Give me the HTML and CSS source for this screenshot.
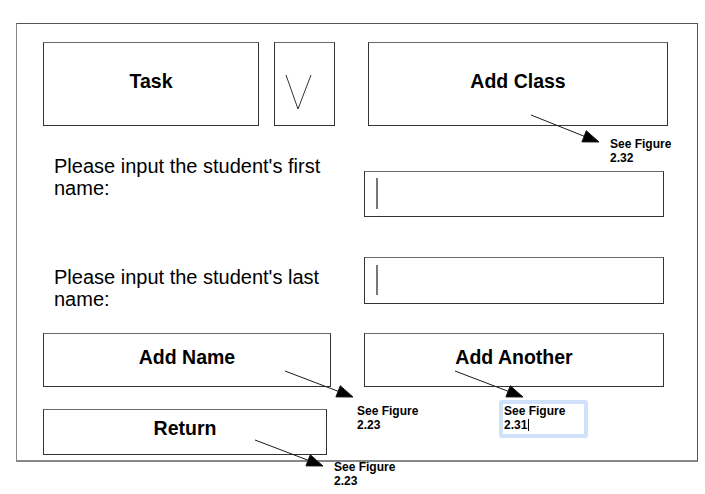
FILE: index.html
```html
<!DOCTYPE html>
<html>
<head>
<meta charset="utf-8">
<link rel="stylesheet" href="styles.css">
</head>
<body>
<div class="page">
  <div class="frame">
    <div class="row row-top">
      <div class="box btn task">Task</div>
      <div class="box vbox">
        <svg class="vglyph" width="61" height="84" viewBox="0 0 61 84"><polyline points="12,33 24,67 37,33" fill="none" stroke="#333" stroke-width="1"/></svg>
      </div>
      <div class="box btn addclass">Add Class</div>
    </div>
    <div class="row row-first">
      <div class="prompt">Please input the student's first name:</div>
      <div class="box field field-first"><span class="caret"></span></div>
    </div>
    <div class="row row-last">
      <div class="prompt prompt-last">Please input the student's last name:</div>
      <div class="box field field-last"><span class="caret"></span></div>
    </div>
    <div class="row row-actions">
      <div class="box btn addname">Add Name</div>
      <div class="box btn addanother">Add Another</div>
    </div>
    <div class="row row-return">
      <div class="box btn return">Return</div>
    </div>
  </div>

  <svg class="arrows" width="705" height="494" viewBox="0 0 705 494">
    <g stroke="#1a1a1a" stroke-width="1" fill="#000">
      <line x1="531" y1="115" x2="585" y2="136.6"/>
      <polygon points="599,142 581.9,141.9 586.3,130.7"/>
      <line x1="285" y1="371" x2="339" y2="391.6"/>
      <polygon points="353,397 335.9,396.9 340.3,385.7"/>
      <line x1="455" y1="371" x2="509" y2="391.6"/>
      <polygon points="523,397 505.9,396.9 510.3,385.7"/>
      <line x1="255" y1="440" x2="309" y2="460.6"/>
      <polygon points="323,466 305.9,465.9 310.3,454.7"/>
    </g>
  </svg>

  <div class="note note-232">See Figure<br>2.32</div>
  <div class="note note-223a">See Figure<br>2.23</div>
  <div class="note note-231"><div class="note-inner">See Figure<br>2.31<span class="textcaret"></span></div></div>
  <div class="note note-223b">See Figure<br>2.23</div>
</div>
</body>
</html>
```

FILE: styles.css
```css
html, body {
  margin: 0;
  padding: 0;
  background: #ffffff;
}

body {
  font-family: "Liberation Sans", Arial, sans-serif;
  color: #000;
}

.page {
  position: relative;
  width: 705px;
  height: 494px;
  padding: 23px 0 0 16px;
  box-sizing: border-box;
}

.frame {
  box-sizing: border-box;
  width: 682px;
  height: 439px;
  border: 1px solid #555;
  border-left-color: #888;
  border-bottom: 2px solid #888;
  padding: 18px 0 0 26px;
  display: flex;
  flex-direction: column;
}

.row {
  display: flex;
  align-items: flex-start;
}

.box {
  box-sizing: border-box;
  border: 1px solid #333;
  border-top-color: #6a6a6a;
  background: #fff;
}

.btn {
  display: flex;
  align-items: center;
  justify-content: center;
  font-weight: bold;
  font-size: 19.5px;
  padding-bottom: 5px;
}

.task {
  width: 216px;
  height: 84px;
}

.vbox {
  width: 61px;
  height: 84px;
  margin-left: 15px;
  position: relative;
}

.vglyph {
  display: block;
  position: absolute;
  left: -1px;
  top: -1px;
}

.addclass {
  width: 300px;
  height: 84px;
  margin-left: 33px;
}

.row-first {
  margin-top: 29px;
}

.prompt {
  width: 290px;
  margin-left: 11px;
  font-size: 20px;
  line-height: 22px;
}

.field {
  width: 300px;
  margin-left: 20px;
  position: relative;
  padding: 6px 0 0 11px;
}

.field-first {
  height: 46px;
  margin-top: 16px;
}

.row-last {
  margin-top: 40px;
}

.prompt-last {
  margin-top: 9px;
}

.field-last {
  height: 47px;
  margin-top: 0;
  padding-top: 7px;
}

.caret {
  display: block;
  width: 2px;
  height: 31px;
  background: #777;
}

.field-last .caret {
  height: 30px;
}

.row-actions {
  margin-top: 23px;
}

.addname {
  width: 288px;
  height: 54px;
}

.addanother {
  width: 300px;
  height: 54px;
  margin-left: 33px;
}

.row-return {
  margin-top: 22px;
}

.return {
  width: 284px;
  height: 46px;
  padding-bottom: 7px;
}

.arrows {
  position: absolute;
  left: 0;
  top: 0;
  pointer-events: none;
}

.note {
  position: absolute;
  font-weight: bold;
  font-size: 12px;
  line-height: 13.5px;
  color: #000;
}

.note-232 {
  left: 610px;
  top: 138px;
}

.note-223a {
  left: 357px;
  top: 405px;
}

.note-223b {
  left: 334px;
  top: 461px;
}

.note-231 {
  left: 499px;
  top: 400px;
  width: 89px;
  height: 38px;
  box-sizing: border-box;
  border: 4px solid #cfe2fa;
  border-radius: 3px;
  background: #fff;
}

.note-inner {
  padding: 1px 0 0 1px;
}

.textcaret {
  display: inline-block;
  width: 1px;
  height: 12px;
  background: #000;
  vertical-align: -2px;
  margin-left: 1px;
}
```
